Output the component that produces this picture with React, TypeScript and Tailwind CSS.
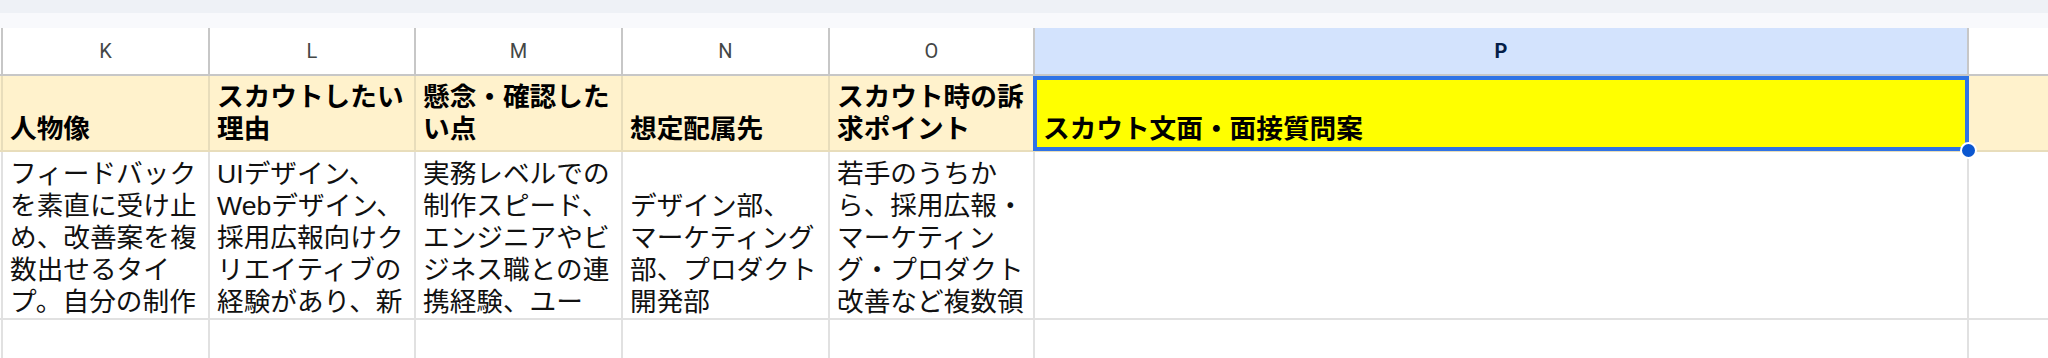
import React from "react";

const colW = ["w-[207px]", "w-[206px]", "w-[207px]", "w-[207px]", "w-[205px]"];
const letters = ["K", "L", "M", "N", "O"];

const heads: string[][] = [
  ["人物像"],
  ["スカウトしたい", "理由"],
  ["懸念・確認した", "い点"],
  ["想定配属先"],
  ["スカウト時の訴", "求ポイント"],
];

const data: string[][] = [
  ["フィードバック", "を素直に受け止", "め、改善案を複", "数出せるタイ", "プ。自分の制作"],
  ["UIデザイン、", "Webデザイン、", "採用広報向けク", "リエイティブの", "経験があり、新"],
  ["実務レベルでの", "制作スピード、", "エンジニアやビ", "ジネス職との連", "携経験、ユー"],
  ["デザイン部、", "マーケティング", "部、プロダクト", "開発部"],
  ["若手のうちか", "ら、採用広報・", "マーケティン", "グ・プロダクト", "改善など複数領"],
];

export default function App() {
  return (
    <div className="relative w-[2048px] h-[358px] overflow-hidden bg-white font-['Liberation_Sans','Noto_Sans_CJK_JP',sans-serif]">
      <div className="h-[13px] bg-[#eef1f6]" />
      <div className="h-[15px] bg-[#f8f9fc]" />

      {/* column letters */}
      <div className="flex h-[48px] border-b-2 border-[#c7c7c7] font-['Roboto',sans-serif] text-[20px] text-[#444746]">
        <div className="w-[3px] shrink-0 border-r-2 border-[#c7c7c7]" />
        {letters.map((l, i) => (
          <div
            key={l}
            className={`${colW[i]} shrink-0 flex items-center justify-center border-r-2 border-[#c7c7c7]`}
          >
            {l}
          </div>
        ))}
        <div className="w-[934px] shrink-0 flex items-center justify-center border-r-2 border-[#c7c7c7] bg-[#d3e3fd] font-bold text-[#041e49]">
          P
        </div>
        <div className="flex-1" />
      </div>

      {/* header row */}
      <div className="flex h-[76px] border-b-2 border-[#e8ddbb] bg-[#fff2cc] text-[26.67px] leading-[32px] font-bold text-black">
        <div className="w-[3px] shrink-0 border-r-2 border-[#e8ddbb]" />
        {heads.map((lines, i) => (
          <div
            key={i}
            className={`${colW[i]} shrink-0 flex flex-col justify-end overflow-hidden whitespace-nowrap border-r-2 border-[#e8ddbb] px-[7px] pb-[5px]`}
          >
            {lines.map((t) => (
              <div key={t}>{t}</div>
            ))}
          </div>
        ))}
        <div className="w-[934px] shrink-0 flex flex-col justify-end overflow-hidden whitespace-nowrap border-r-2 border-[#e8ddbb] bg-[#ffff00] px-[8px] pb-[5px]">
          <div>スカウト文面・面接質問案</div>
        </div>
        <div className="flex-1" />
      </div>

      {/* data row */}
      <div className="flex h-[168px] border-b-2 border-[#e1e1e1] text-[26.67px] leading-[32px] text-[#111]">
        <div className="w-[3px] shrink-0 border-r-2 border-[#e1e1e1]" />
        {data.map((lines, i) => (
          <div
            key={i}
            className={`${colW[i]} shrink-0 flex flex-col justify-end overflow-hidden whitespace-nowrap border-r-2 border-[#e1e1e1] px-[7px] pb-0`}
          >
            {lines.map((t) => (
              <div key={t}>{t}</div>
            ))}
          </div>
        ))}
        <div className="w-[934px] shrink-0 border-r-2 border-[#e1e1e1]" />
        <div className="flex-1" />
      </div>

      {/* empty row */}
      <div className="flex h-[38px]">
        <div className="w-[3px] shrink-0 border-r-2 border-[#e1e1e1]" />
        {colW.map((w, i) => (
          <div key={i} className={`${w} shrink-0 border-r-2 border-[#e1e1e1]`} />
        ))}
        <div className="w-[934px] shrink-0 border-r-2 border-[#e1e1e1]" />
        <div className="flex-1" />
      </div>

      {/* selection */}
      <div className="absolute left-[1033px] top-[76px] w-[936px] h-[75px] border-[4px] border-[#2f73e6] pointer-events-none" />
      <div className="absolute left-[1960px] top-[142px] w-[17px] h-[17px] rounded-full bg-[#0b57d0] border-2 border-white" />
    </div>
  );
}
